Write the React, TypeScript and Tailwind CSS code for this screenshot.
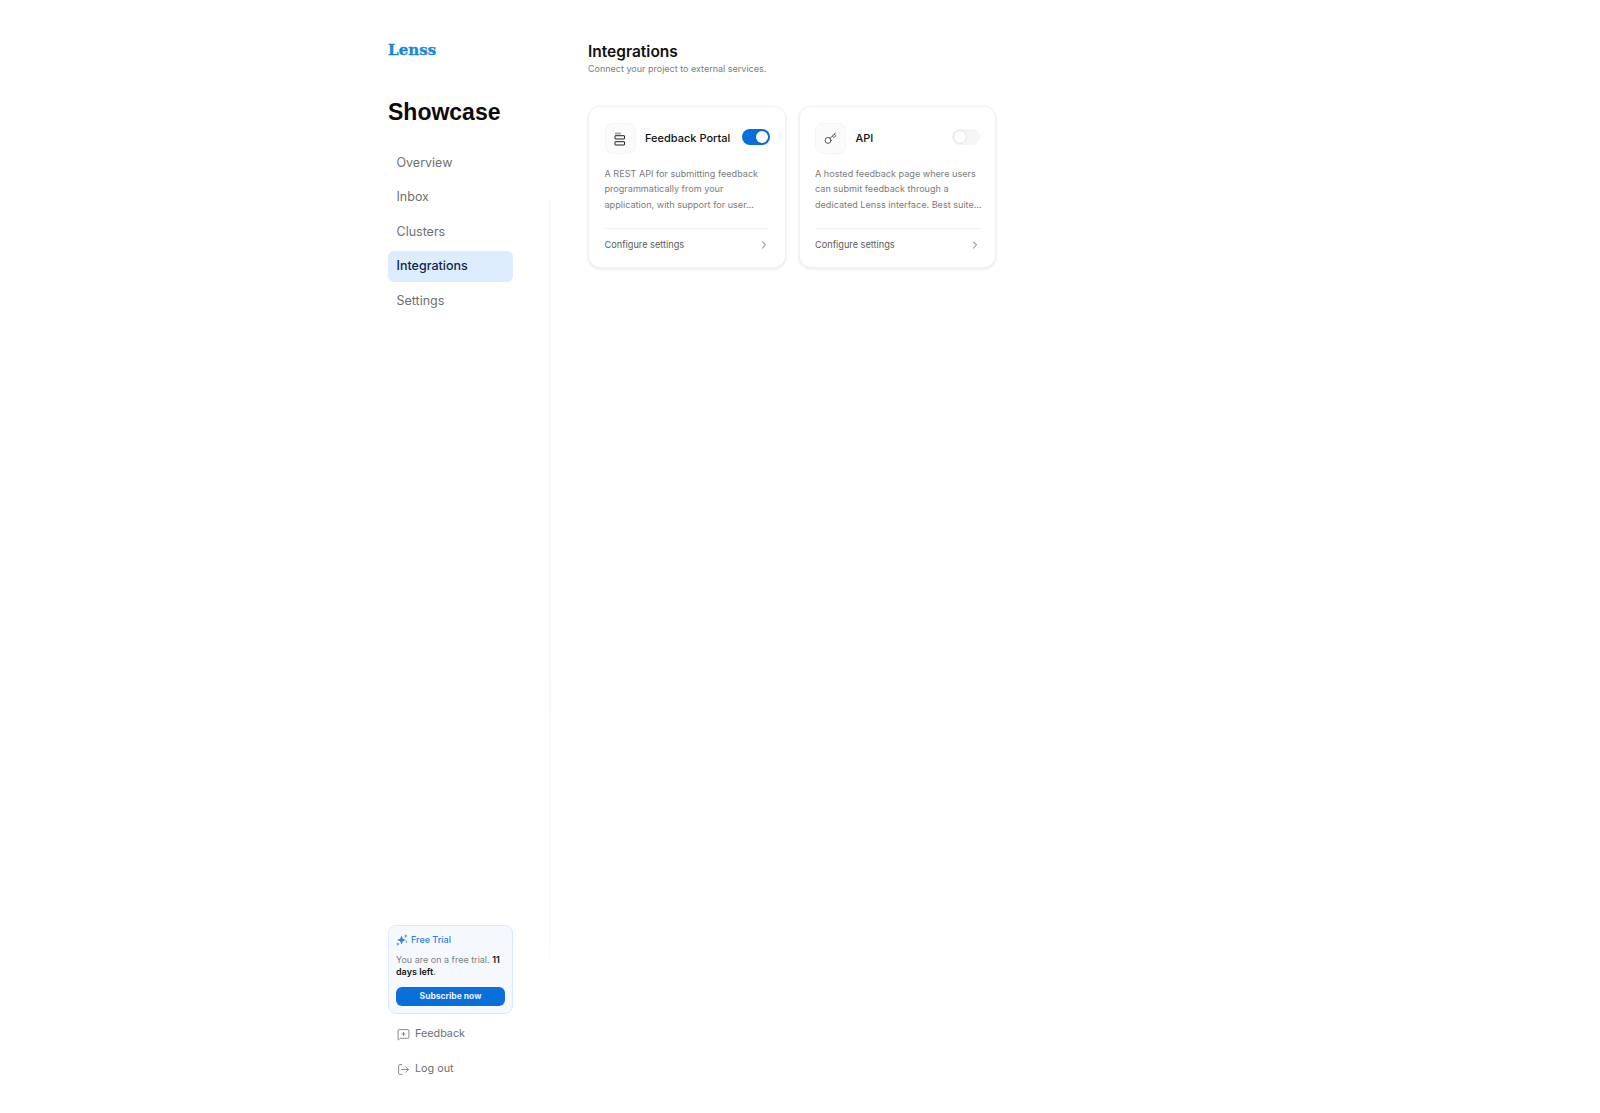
import { ChevronRight, Key, LogOut, MessageSquarePlus } from 'lucide-react';
import type { ReactNode } from 'react';

const NAV = ['Overview', 'Inbox', 'Clusters', 'Integrations', 'Settings'];

type CardProps = {
  icon: ReactNode;
  title: string;
  enabled: boolean;
  description: string;
};

function PortalIcon() {
  return (
    <svg width="12" height="14" viewBox="0 0 12 14" fill="none" className="text-[#222]">
      <rect x="1" y="0.5" width="6" height="2" rx="0.3" fill="#a8a8a8" />
      <rect x="1" y="3.7" width="9.5" height="3.3" rx="0.3" stroke="currentColor" strokeWidth="1" />
      <rect x="1" y="9.7" width="9.5" height="3.3" rx="0.3" stroke="currentColor" strokeWidth="1" />
    </svg>
  );
}

function TrialIcon() {
  return (
    <svg width="12" height="12" viewBox="0 0 12 12" fill="currentColor">
      <path d="M5.5 1.6 6.8 4.7l3 1.3-3 1.3-1.3 3.1-1.3-3.1-3-1.3 3-1.3z" />
      <path d="M9.8.3l.5 1.3 1.3.5-1.3.5-.5 1.3-.5-1.3-1.3-.5 1.3-.5z" />
      <path d="M1.9 8.4l.5 1.2 1.2.5-1.2.5-.5 1.2-.5-1.2-1.2-.5 1.2-.5z" />
      <circle cx="10.4" cy="8" r="0.8" />
    </svg>
  );
}

function Toggle({ enabled }: { enabled: boolean }) {
  return (
    <span
      className={`flex h-4 w-7 items-center rounded-full p-0.5 ${
        enabled ? 'justify-end bg-[#0b6fdb]' : 'justify-start bg-[#f5f5f5]'
      }`}
    >
      <span className="size-3 rounded-full bg-white shadow-[0_0_2px_rgba(0,0,0,0.2)]" />
    </span>
  );
}

function IntegrationCard({ icon, title, enabled, description }: CardProps) {
  return (
    <div className="flex h-[162px] w-[197.5px] flex-col rounded-[12px] border border-[#f2f2f2] bg-white px-[15.5px] pt-[16px] shadow-[0_1px_3px_rgba(0,0,0,0.1)]">
      <div className="flex items-center">
        <span className="flex h-[31px] w-[31px] items-center justify-center rounded-[8px] border border-[#f5f5f5] bg-[#fbfbfb]">
          {icon}
        </span>
        <span className="ml-[9.5px] text-[11px] font-medium text-[#111]">{title}</span>
        <span className="-mr-[0.5px] mb-[3px] ml-auto">
          <Toggle enabled={enabled} />
        </span>
      </div>
      <p className="-mr-[4px] mt-[12px] text-[9.1px] leading-[15.4px] text-[#7c7c7c]">{description}</p>
      <div className="mt-4 border-t border-[#f1f1f1]" />
      <div className="-mr-[1px] flex h-[32px] items-center justify-between text-[#5c5c5c]">
        <span className="text-[9.2px]">Configure settings</span>
        <ChevronRight className="size-3 text-[#555]" strokeWidth={1.75} />
      </div>
    </div>
  );
}

export default function App() {
  return (
    <div className="mx-auto flex h-[1113px] w-[824px] font-['Inter',sans-serif]">
      <aside className="flex w-[125px] shrink-0 flex-col pb-[26px] pt-[40px]">
        <div className="h-[20px] font-['DejaVu_Serif',serif] text-[15px] font-bold leading-[20px] tracking-[0.1px] text-[#1a86e0] [-webkit-text-stroke:0.35px_#1a86e0]">
          Lenss
        </div>
        <h1 className="mt-[36px] font-['Liberation_Sans',sans-serif] text-[23px] font-bold leading-[32px] text-[#0a0a0a]">
          Showcase
        </h1>
        <nav className="mt-[19.5px] flex flex-col gap-[3.5px]">
          {NAV.map((item) => (
            <div
              key={item}
              className={`flex h-[31px] items-center rounded-[6px] px-[8.5px] text-[12.5px] ${
                item === 'Integrations' ? 'bg-[#deedfd] font-medium text-[#10264f]' : 'text-[#6f6f6f]'
              }`}
            >
              {item}
            </div>
          ))}
        </nav>
        <div className="mt-auto rounded-[8px] border border-[#dce9fa] bg-[#f5f9fe] px-[7px] pb-[7px] pt-[7.5px]">
          <div className="flex items-center gap-[3px] text-[9px] font-medium text-[#2f7fdc]">
            <TrialIcon />
            Free Trial
          </div>
          <p className="mt-[7px] text-[9px] leading-[12.5px] text-[#808080]">
            You are on a free trial. <span className="font-semibold text-[#111]">11 days left</span>.
          </p>
          <button className="mt-[8.5px] flex h-[19px] w-full items-center justify-center rounded-[6px] bg-[#0b6fdb] text-[8.5px] font-bold text-[#e8f1fc]">
            Subscribe now
          </button>
        </div>
        <div className="mt-[3px] flex flex-col text-[10.8px] text-[#6f6f6f]">
          <div className="flex h-[35px] items-center gap-[5px] pl-[9px]">
            <MessageSquarePlus className="size-[13px]" strokeWidth={1.5} />
            Feedback
          </div>
          <div className="flex h-[35px] items-center gap-[5px] pl-[9px]">
            <LogOut className="size-[13px]" strokeWidth={1.5} />
            Log out
          </div>
        </div>
      </aside>
      <div className="mb-[150px] ml-[36px] mt-[200px] w-[2px] bg-gradient-to-b from-[#f5f5f5] via-[#f5f5f5] to-[#fcfcfc]" />
      <main className="ml-[37px] flex-1 pt-[42px]">
        <h2 className="text-[15.5px] font-semibold leading-[20px] text-[#111]">Integrations</h2>
        <p className="text-[9px] leading-[14px] text-[#7c7c7c]">Connect your project to external services.</p>
        <div className="mt-[30px] flex gap-[13px]">
          <IntegrationCard
            icon={<PortalIcon />}
            title="Feedback Portal"
            enabled
            description="A REST API for submitting feedback programmatically from your application, with support for user…"
          />
          <IntegrationCard
            icon={<Key className="size-[13px] text-[#333]" strokeWidth={1.5} />}
            title="API"
            enabled={false}
            description="A hosted feedback page where users can submit feedback through a dedicated Lenss interface. Best suite…"
          />
        </div>
      </main>
    </div>
  );
}
